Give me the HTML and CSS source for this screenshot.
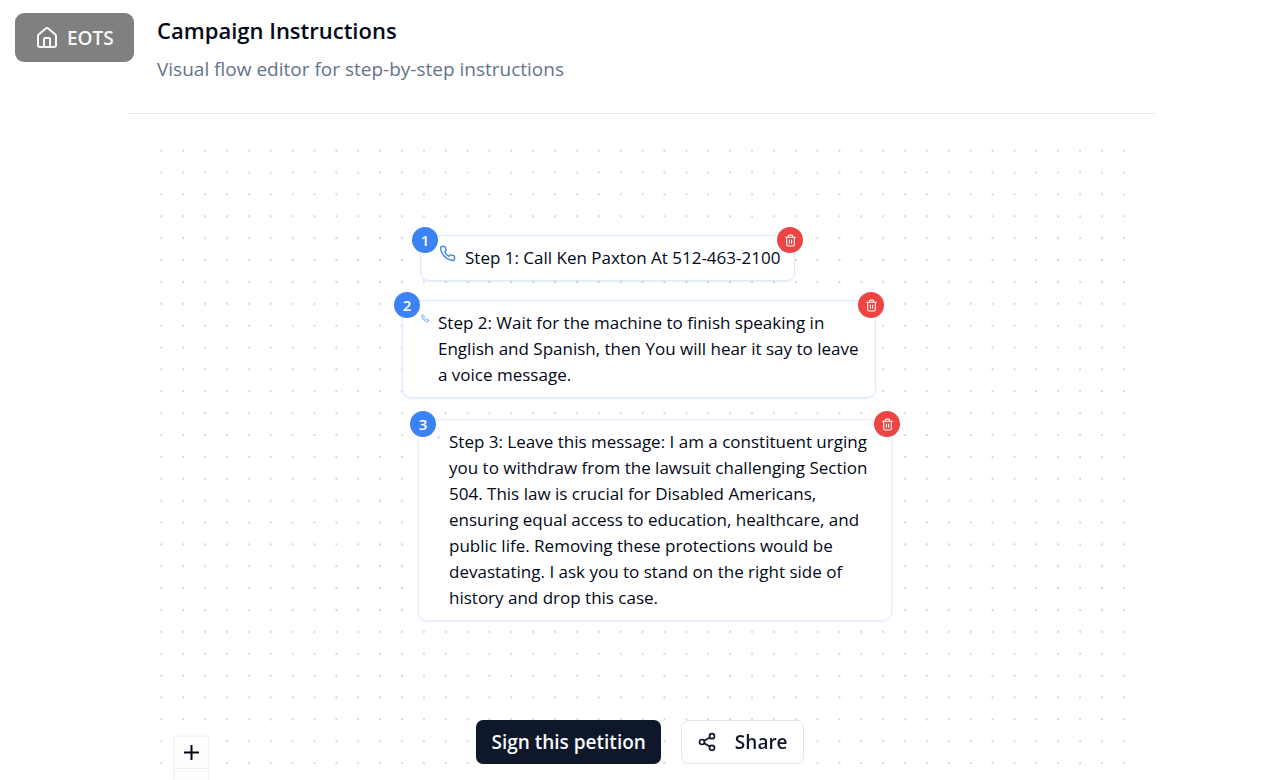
FILE: index.html
```html
<!DOCTYPE html>
<html lang="en">
<head>
    <meta charset="UTF-8">
    <meta name="viewport" content="width=device-width, initial-scale=1.0">
    <title>Campaign Instructions</title>
    <link rel="stylesheet" href="styles.css">
</head>
<body>
    <svg class="sprite" aria-hidden="true">
        <symbol id="icon-phone" viewBox="0 0 24 24">
            <path d="M22 16.92v3a2 2 0 0 1-2.18 2 19.79 19.79 0 0 1-8.63-3.07 19.5 19.5 0 0 1-6-6 19.79 19.79 0 0 1-3.07-8.67A2 2 0 0 1 4.11 2h3a2 2 0 0 1 2 1.72 12.84 12.84 0 0 0 .7 2.81 2 2 0 0 1-.45 2.11L8.09 9.91a16 16 0 0 0 6 6l1.27-1.27a2 2 0 0 1 2.11-.45 12.84 12.84 0 0 0 2.81.7A2 2 0 0 1 22 16.92z"/>
        </symbol>
        <symbol id="icon-trash" viewBox="0 0 24 24">
            <path d="M3 6h18M19 6v14c0 1-1 2-2 2H7c-1 0-2-1-2-2V6M8 6V4c0-1 1-2 2-2h4c1 0 2 1 2 2v2M10 11v6M14 11v6"/>
        </symbol>
    </svg>

    <a href="#" class="home-link">
        <svg class="icon" viewBox="0 0 24 24" aria-hidden="true">
            <path d="M15 21v-8a1 1 0 0 0-1-1h-4a1 1 0 0 0-1 1v8"/>
            <path d="M3 10a2 2 0 0 1 .709-1.528l7-5.999a2 2 0 0 1 2.582 0l7 5.999A2 2 0 0 1 21 10v9a2 2 0 0 1-2 2H5a2 2 0 0 1-2-2z"/>
        </svg>
        EOTS
    </a>

    <main class="page">
        <header class="page-header">
            <h1>Campaign Instructions</h1>
            <p>Visual flow editor for step-by-step instructions</p>
        </header>

        <section class="canvas">
            <svg class="dots" viewBox="0 0 886 700" preserveAspectRatio="xMinYMin slice" aria-hidden="true">
                <pattern id="dot-grid" x="3" y="7" width="20" height="20" patternUnits="userSpaceOnUse">
                    <circle cx="1" cy="1" r="0.7" fill="#a0a0a0"/>
                </pattern>
                <rect width="100%" height="100%" fill="url(#dot-grid)"/>
            </svg>

            <article class="node node-1">
                <span class="badge">1</span>
                <svg class="node-icon" aria-hidden="true"><use href="#icon-phone"/></svg>
                <p>Step 1: Call Ken Paxton At 512-463-2100</p>
                <button class="delete-btn" aria-label="Delete step 1"><svg class="icon"><use href="#icon-trash"/></svg></button>
            </article>

            <article class="node node-2">
                <span class="badge">2</span>
                <svg class="node-icon" aria-hidden="true"><use href="#icon-phone"/></svg>
                <p>Step 2: Wait for the machine to finish speaking in English and Spanish, then You will hear it say to leave a voice message.</p>
                <button class="delete-btn" aria-label="Delete step 2"><svg class="icon"><use href="#icon-trash"/></svg></button>
            </article>

            <article class="node node-3">
                <span class="badge">3</span>
                <svg class="node-icon" viewBox="0 0 24 24" aria-hidden="true">
                    <path d="M21 15a2 2 0 0 1-2 2H7l-4 4V5a2 2 0 0 1 2-2h14a2 2 0 0 1 2 2z"/>
                </svg>
                <p>Step 3: Leave this message: I am a constituent urging you to withdraw from the lawsuit challenging Section 504. This law is crucial for Disabled Americans, ensuring equal access to education, healthcare, and public life. Removing these protections would be devastating. I ask you to stand on the right side of history and drop this case.</p>
                <button class="delete-btn" aria-label="Delete step 3"><svg class="icon"><use href="#icon-trash"/></svg></button>
            </article>

            <div class="zoom-controls">
                <button aria-label="Zoom in">
                    <svg viewBox="0 0 32 32"><path d="M32 18.133H18.133V32h-4.266V18.133H0v-4.266h13.867V0h4.266v13.867H32z"/></svg>
                </button>
                <button aria-label="Zoom out">
                    <svg viewBox="0 0 32 5"><path d="M0 0h32v4.2H0z"/></svg>
                </button>
            </div>
        </section>
    </main>

    <div class="actions">
        <button class="btn btn-primary">Sign this petition</button>
        <button class="btn btn-outline">
            <svg class="icon" viewBox="0 0 24 24" aria-hidden="true">
                <circle cx="18" cy="5" r="3"/>
                <circle cx="6" cy="12" r="3"/>
                <circle cx="18" cy="19" r="3"/>
                <path d="M8.59 13.51l6.83 3.98M15.41 6.51l-6.82 3.98"/>
            </svg>
            Share
        </button>
    </div>
</body>
</html>
```
FILE: styles.css
```css
* {
    box-sizing: border-box;
}

body {
    margin: 0;
    height: 100vh;
    overflow: hidden;
    background: #ffffff;
    color: #020817;
    font-family: "Segoe UI", "Open Sans", "Noto Sans", sans-serif;
    font-size: 17px;
    line-height: 26px;
}

h1,
p {
    margin: 0;
}

button {
    font: inherit;
    cursor: pointer;
}

.sprite {
    position: absolute;
    width: 0;
    height: 0;
}

.icon,
.node-icon {
    fill: none;
    stroke: currentColor;
    stroke-width: 2;
    stroke-linecap: round;
    stroke-linejoin: round;
    flex-shrink: 0;
}

/* Home button */
.home-link {
    position: fixed;
    top: 13px;
    left: 15px;
    display: flex;
    align-items: center;
    gap: 8px;
    height: 49px;
    padding: 0 20px;
    border-radius: 9px;
    background: #808080;
    color: #f8f8f8;
    font-size: 19px;
    font-weight: 600;
    text-decoration: none;
}

.home-link .icon {
    width: 24px;
    height: 24px;
}

/* Page */
.page {
    margin: 0 125px 0 128px;
}

.page-header {
    height: 114px;
    padding: 14px 29px 0;
    border-bottom: 1px solid #e2e8f0;
}

.page-header h1 {
    font-size: 22px;
    font-weight: 600;
    line-height: 32px;
}

.page-header p {
    margin-top: 8px;
    color: #64748b;
    font-size: 19px;
    line-height: 30px;
}

/* Flow canvas */
.canvas {
    position: relative;
    height: 740px;
    margin: 28px 29px 0;
}

.dots {
    position: absolute;
    inset: 0;
    width: 100%;
    height: 100%;
}

.node {
    position: absolute;
    display: flex;
    align-items: flex-start;
    gap: 9px;
    width: 474px;
    padding: 9px 8px 9px 18px;
    border: 1px solid #dbeafe;
    border-radius: 9px;
    background: #ffffff;
    box-shadow: 0 1px 2px rgba(59, 130, 246, 0.12);
}

.node-1 {
    top: 93px;
    left: 263px;
    width: 375px;
}

.node-2 {
    top: 158px;
    left: 245px;
}

.node-3 {
    top: 277px;
    left: 261px;
    border-color: #f3e8ff;
}

.node-icon {
    width: 17px;
    height: 17px;
    color: #3b82f6;
}

.node-2 .node-icon {
    width: 8px;
}

.node-3 .node-icon {
    width: 3px;
    color: #a855f7;
}

.badge,
.delete-btn {
    position: absolute;
    top: -9px;
    display: flex;
    align-items: center;
    justify-content: center;
    width: 26px;
    height: 26px;
    padding: 0;
    border: none;
    border-radius: 50%;
    color: #ffffff;
}

.badge {
    left: -9px;
    background: #3b82f6;
    font-size: 15px;
    font-weight: 600;
}

.delete-btn {
    right: -9px;
    background: #ef4444;
}

.delete-btn .icon {
    width: 13px;
    height: 13px;
}

/* Zoom buttons */
.zoom-controls {
    position: absolute;
    top: 595px;
    left: 18px;
    box-shadow: 0 0 2px 1px rgba(0, 0, 0, 0.08);
}

.zoom-controls button {
    display: flex;
    align-items: center;
    justify-content: center;
    width: 33px;
    height: 32px;
    padding: 0;
    border: none;
    border-bottom: 1px solid #eeeeee;
    background: #fefefe;
}

.zoom-controls svg {
    width: 15px;
    fill: #020817;
}

/* Bottom actions */
.actions {
    position: fixed;
    right: 0;
    bottom: 16px;
    left: 0;
    display: flex;
    justify-content: center;
    gap: 20px;
}

.btn {
    display: flex;
    align-items: center;
    height: 44px;
    padding: 0 15px;
    border: none;
    border-radius: 7px;
    font-size: 19px;
    font-weight: 600;
}

.btn-primary {
    background: #0f172a;
    color: #f8fafc;
}

.btn-outline {
    gap: 18px;
    border: 1px solid #e2e8f0;
    background: #ffffff;
    color: #0f172a;
}

.btn-outline .icon {
    width: 20px;
    height: 20px;
}
```
